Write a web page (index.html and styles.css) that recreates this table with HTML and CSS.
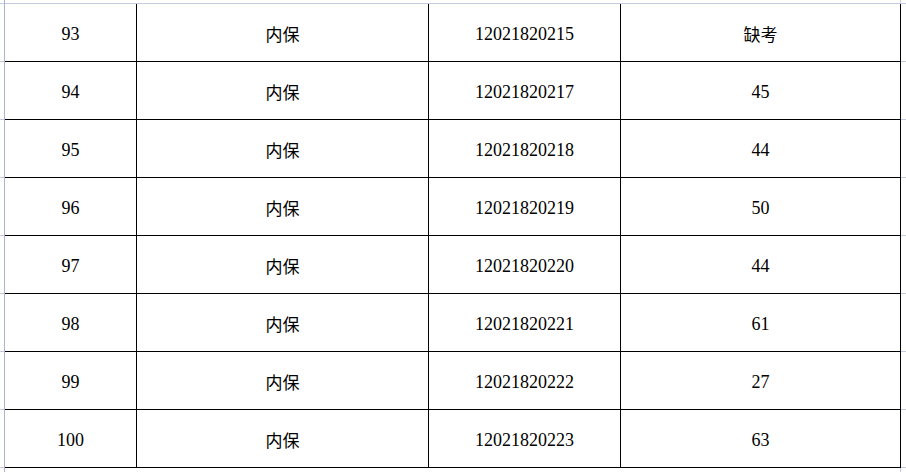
FILE: index.html
```html
<!DOCTYPE html>
<html lang="zh-CN">
<head>
<meta charset="utf-8">
<title>成绩表</title>
<link rel="stylesheet" href="styles.css">
</head>
<body>
<div class="sheet">
  <div class="table">
    <div class="row"><div class="cell num">93</div><div class="cell cjk">内保</div><div class="cell num">12021820215</div><div class="cell cjk">缺考</div></div>
    <div class="row"><div class="cell num">94</div><div class="cell cjk">内保</div><div class="cell num">12021820217</div><div class="cell num">45</div></div>
    <div class="row"><div class="cell num">95</div><div class="cell cjk">内保</div><div class="cell num">12021820218</div><div class="cell num">44</div></div>
    <div class="row"><div class="cell num">96</div><div class="cell cjk">内保</div><div class="cell num">12021820219</div><div class="cell num">50</div></div>
    <div class="row"><div class="cell num">97</div><div class="cell cjk">内保</div><div class="cell num">12021820220</div><div class="cell num">44</div></div>
    <div class="row"><div class="cell num">98</div><div class="cell cjk">内保</div><div class="cell num">12021820221</div><div class="cell num">61</div></div>
    <div class="row"><div class="cell num">99</div><div class="cell cjk">内保</div><div class="cell num">12021820222</div><div class="cell num">27</div></div>
    <div class="row"><div class="cell num">100</div><div class="cell cjk">内保</div><div class="cell num">12021820223</div><div class="cell num">63</div></div>
  </div>
</div>
</body>
</html>
```
FILE: styles.css
```css
html, body {
  margin: 0;
  padding: 0;
  background: #fff;
}

.sheet {
  height: 472px;
  overflow: hidden;
  padding-top: 4px;
  padding-left: 5px;
  box-sizing: border-box;
  background:
    linear-gradient(to right, transparent 4px, #a9b2d2 4px, #a9b2d2 5px, transparent 5px),
    linear-gradient(to right, transparent 900px, #c3c9de 900px, #c3c9de 901px, transparent 901px),
    repeating-linear-gradient(to bottom, #c3c9de 0, #c3c9de 1px, #fff 1px, #fff 58px);
  background-position: 0 0, 0 0, 0 3px;
  background-repeat: no-repeat, no-repeat, repeat;
  background-size: 100% 100%, 100% 100%, 100% 58px;
}

.table {
  width: 896px;
  background: #fff;
}

.row {
  display: grid;
  grid-template-columns: 132px 292px 192px 280px;
  height: 58px;
  box-sizing: border-box;
  border-bottom: 1px solid #000;
}

.cell {
  display: flex;
  align-items: center;
  justify-content: center;
  border-right: 1px solid #000;
  padding-top: 3px;
  box-sizing: border-box;
  color: #000;
}

.num {
  font-family: "Liberation Serif", "Noto Sans CJK SC", serif;
  font-size: 18px;
}

.cjk {
  font-family: "Noto Sans CJK SC", sans-serif;
  font-size: 17px;
  padding-top: 1px;
}
```
